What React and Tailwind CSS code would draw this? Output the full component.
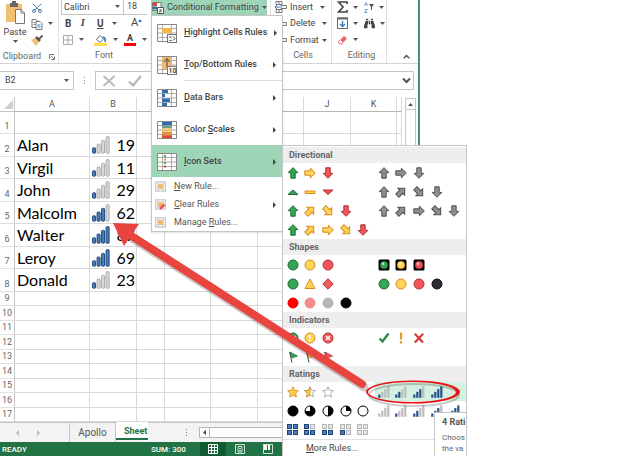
import { LuScissors } from "react-icons/lu";
import { FaBinoculars } from "react-icons/fa";

const COLUMNS = [
    { label: "A", width: "w-[75px]" },
    { label: "B", width: "w-[47px]" },
    { label: "", width: "w-[28px]" },
    { label: "", width: "w-[46px]" },
    { label: "", width: "w-[47px]" },
    { label: "", width: "w-[46px]" },
    { label: "J", width: "w-[47px]" },
    { label: "K", width: "w-[46px]" },
    { label: "", width: "w-auto" },
];

const PEOPLE = [
    { name: "Alan", score: 19, level: 1 },
    { name: "Virgil", score: 11, level: 1 },
    { name: "John", score: 29, level: 1 },
    { name: "Malcolm", score: 62, level: 3 },
    { name: "Walter", score: 87, level: 4 },
    { name: "Leroy", score: 69, level: 4 },
    { name: "Donald", score: 23, level: 1 },
];

const TONES = {
    green: ["#35a556", "#1c6b33"],
    yellow: ["#ffd558", "#d88a1c"],
    red: ["#f0565a", "#b02f34"],
    gray: ["#8f8f8f", "#4f4f4f"],
    black: ["#2b2b33", "#101014"],
};

const Icon = ({ children }) => (
    <svg width="12" height="12" viewBox="0 0 12 12" aria-hidden="true">
        {children}
    </svg>
);

const Arrow = ({ tone, turn = 0 }) => (
    <Icon>
        <path
            d="M6 .7 L10.8 5.6 H8.2 V11.2 H3.8 V5.6 H1.2 Z"
            transform={`rotate(${turn} 6 6)`}
            fill={TONES[tone][0]}
            stroke={TONES[tone][1]}
        />
    </Icon>
);

const Dot = ({ tone, fill, mark }) => (
    <Icon>
        <circle cx="6" cy="6" r="5" fill={fill || TONES[tone][0]} stroke={fill || TONES[tone][1]} />
        {mark === "check" && <path d="M3.5 6 L5.4 8 L8.6 4" fill="none" stroke="#fff" strokeWidth="1.5" />}
        {mark === "bang" && <path d="M6 3 V6.8 M6 8 V9.3" stroke="#fff" strokeWidth="1.6" />}
        {mark === "cross" && <path d="M4 4 L8 8 M8 4 L4 8" stroke="#fff" strokeWidth="1.5" />}
    </Icon>
);

const Lamp = ({ tone }) => (
    <Icon>
        <rect x=".5" y=".5" width="11" height="11" rx="1.5" fill="#000" />
        <circle cx="6" cy="6" r="3.8" fill={TONES[tone][0]} stroke={TONES[tone][1]} strokeWidth=".6" />
        <circle cx="5" cy="4.8" r="1.2" fill="#fff" opacity=".7" />
    </Icon>
);

const Poly = ({ tone, d }) => (
    <Icon>
        <path d={d} fill={TONES[tone][0]} stroke={TONES[tone][1]} />
    </Icon>
);

const Flag = ({ tone }) => (
    <Icon>
        <path d="M3 1 L10.5 5 L5 7 Z" fill={TONES[tone][0]} stroke={TONES[tone][1]} strokeWidth=".7" />
        <path d="M2.6 1 L5 11.5" stroke="#444" />
    </Icon>
);

const Stroke = ({ d, color, width = 2 }) => (
    <Icon>
        <path d={d} fill="none" stroke={color} strokeWidth={width} />
    </Icon>
);

const STAR = "M6 .8 L7.6 4.3 L11.4 4.7 L8.6 7.3 L9.4 11 L6 9.1 L2.6 11 L3.4 7.3 L.6 4.7 L4.4 4.3 Z";
const HALF_STAR = "M6 .8 L6 9.1 L2.6 11 L3.4 7.3 L.6 4.7 L4.4 4.3 Z";

const Star = ({ level }) => (
    <Icon>
        <path d={STAR} fill={level === 2 ? "#ffcf4a" : "#fff"} stroke={level === 2 ? "#d88a1c" : "#9a9a9a"} strokeWidth=".8" />
        {level === 1 && <path d={HALF_STAR} fill="#ffcf4a" stroke="#d88a1c" strokeWidth=".8" />}
    </Icon>
);

const Pie = ({ d, full }) => (
    <Icon>
        <circle cx="6" cy="6" r="5" fill={full ? "#000" : "#fff"} stroke="#000" />
        {d && <path d={d} fill="#000" />}
    </Icon>
);

// Filled from the bottom left corner
const Boxes = ({ level }) => (
    <Icon>
        {[[0, 6], [6, 6], [0, 0], [6, 0]].map(([x, y], i) => (
            <g key={i}>
                <rect x={x} y={y} width="5" height="5" fill={i < level ? "#1f4478" : "#b4b4b4"} />
                <rect x={x + 1} y={y + 1} width="3" height="3" fill={i < level ? "#4f7db8" : "#e6e6e6"} />
            </g>
        ))}
    </Icon>
);

const Bars = ({ level }) => (
    <Icon>
        {[0, 1, 2, 3].map((i) => (
            <rect
                key={i}
                x={i * 3 + 0.2}
                y={8.5 - i * 2.7}
                width="2.2"
                height={3.3 + i * 2.7}
                fill={i < level ? "#27548f" : "#bdbdbd"}
            />
        ))}
    </Icon>
);

const CellBars = ({ level }) => (
    <svg width="18" height="18" viewBox="0 0 18 18" aria-hidden="true">
        {[0, 1, 2, 3].map((i) => (
            <rect
                key={i}
                x={i * 4.5 + 0.6}
                y={11.8 - i * 3.7}
                width="3"
                height={5.4 + i * 3.7}
                rx=".8"
                fill={i < level ? "#4a80bb" : "#d9d9d9"}
                stroke={i < level ? "#1d4478" : "#a9a9a9"}
            />
        ))}
    </svg>
);

const ICON_GROUPS = [
    {
        title: "Directional",
        rows: [
            [
                [<Arrow tone="green" />, <Arrow tone="yellow" turn={90} />, <Arrow tone="red" turn={180} />],
                [<Arrow tone="gray" />, <Arrow tone="gray" turn={90} />, <Arrow tone="gray" turn={180} />],
            ],
            [
                [
                    <Poly tone="green" d="M1 8.5 L6 4 L11 8.5 Z" />,
                    <Poly tone="yellow" d="M1 5 H11 V7.5 H1 Z" />,
                    <Poly tone="red" d="M1 4 L6 8.5 L11 4 Z" />,
                ],
                [<Arrow tone="gray" />, <Arrow tone="gray" turn={45} />, <Arrow tone="gray" turn={135} />, <Arrow tone="gray" turn={180} />],
            ],
            [
                [<Arrow tone="green" />, <Arrow tone="yellow" turn={45} />, <Arrow tone="yellow" turn={135} />, <Arrow tone="red" turn={180} />],
                [
                    <Arrow tone="gray" />,
                    <Arrow tone="gray" turn={45} />,
                    <Arrow tone="gray" turn={90} />,
                    <Arrow tone="gray" turn={135} />,
                    <Arrow tone="gray" turn={180} />,
                ],
            ],
            [
                [
                    <Arrow tone="green" />,
                    <Arrow tone="yellow" turn={45} />,
                    <Arrow tone="yellow" turn={90} />,
                    <Arrow tone="yellow" turn={135} />,
                    <Arrow tone="red" turn={180} />,
                ],
            ],
        ],
    },
    {
        title: "Shapes",
        rows: [
            [
                [<Dot tone="green" />, <Dot tone="yellow" />, <Dot tone="red" />],
                [<Lamp tone="green" />, <Lamp tone="yellow" />, <Lamp tone="red" />],
            ],
            [
                [
                    <Dot tone="green" />,
                    <Poly tone="yellow" d="M6 1 L11 10.5 H1 Z" />,
                    <Poly tone="red" d="M6 .8 L11.2 6 L6 11.2 L.8 6 Z" />,
                ],
                [<Dot tone="green" />, <Dot tone="yellow" />, <Dot tone="red" />, <Dot tone="black" />],
            ],
            [[<Dot fill="#ff0000" />, <Dot fill="#f48a8a" />, <Dot fill="#b5b5b5" />, <Dot fill="#050505" />]],
        ],
    },
    {
        title: "Indicators",
        rows: [
            [
                [<Dot tone="green" mark="check" />, <Dot tone="yellow" mark="bang" />, <Dot tone="red" mark="cross" />],
                [
                    <Stroke color="#2c8a48" d="M1.5 6.5 L4.5 9.5 L10.5 1.5" width={2.4} />,
                    <Stroke color="#e39a2d" d="M6 .5 V7.5 M6 9 V11.5" width={2.2} />,
                    <Stroke color="#d8393c" d="M1.8 1.8 L10 10.5 M10.2 1.8 L1.8 10.5" width={2.2} />,
                ],
            ],
            [[<Flag tone="green" />, <Flag tone="yellow" />, <Flag tone="red" />]],
        ],
    },
    {
        title: "Ratings",
        rows: [
            [
                [<Star level={2} />, <Star level={1} />, <Star level={0} />],
                [<Bars level={1} />, <Bars level={2} />, <Bars level={3} />, <Bars level={4} />],
            ],
            [
                [
                    <Pie full />,
                    <Pie d="M6 6 V1 A5 5 0 1 1 1 6 Z" />,
                    <Pie d="M6 1 A5 5 0 0 1 6 11 Z" />,
                    <Pie d="M6 6 V1 A5 5 0 0 1 11 6 Z" />,
                    <Pie />,
                ],
                [<Bars level={0} />, <Bars level={1} />, <Bars level={2} />, <Bars level={3} />, <Bars level={4} />],
            ],
            [[<Boxes level={4} />, <Boxes level={3} />, <Boxes level={2} />, <Boxes level={1} />, <Boxes level={0} />]],
        ],
    },
];

const Caret = () => (
    <svg width="5" height="3" viewBox="0 0 5 3" className="shrink-0" aria-hidden="true">
        <path d="M0 0 H5 L2.5 3 Z" fill="#555" />
    </svg>
);

// Small spreadsheet thumbnail used by the menu entries
const Sheet = ({ size = 20, children }) => (
    <svg width={size} height={size} viewBox="0 0 20 20" className="shrink-0" aria-hidden="true">
        <path d="M.5 1.5 H19.5 V18.5 H.5 Z" fill="#fff" stroke="#888" />
        <path d="M1 5.5 H19 M1 10 H19 M1 14.5 H19 M5.5 2 V18 M14.5 2 V18" stroke="#aaa" />
        {children}
    </svg>
);

const HighlightIcon = () => (
    <Sheet>
        <rect x="5" y="5" width="10" height="5" fill="#f2b84b" />
        <rect x="10.5" y="11.5" width="9" height="8" fill="#fff" stroke="#777" />
        <path d="M12.5 13.5 L14.5 15 M12.5 17.5 H14.5 M16 13.5 L18 15.5 L16 17.5" fill="none" stroke="#444" />
    </Sheet>
);

const TopBottomIcon = () => (
    <Sheet>
        <rect x="5" y="2" width="10" height="12" fill="#efb674" />
        <path d="M10 12 V4 M7 7 L10 3.5 L13 7" fill="none" stroke="#444" />
        <rect x="10.5" y="11.5" width="9" height="8" fill="#fff" stroke="#777" />
        <text x="11.5" y="18.3" fontSize="7" fontFamily="Roboto, sans-serif" fill="#333">10</text>
    </Sheet>
);

const DataBarsIcon = () => (
    <Sheet>
        <rect x="5" y="2" width="6" height="3" fill="#2f6eab" />
        <rect x="5" y="6" width="3" height="3" fill="#2f6eab" />
        <rect x="5" y="10.5" width="8" height="3.5" fill="#2f6eab" />
        <rect x="5" y="15" width="5" height="3" fill="#2f6eab" />
    </Sheet>
);

const ColorScalesIcon = () => (
    <Sheet>
        <rect x="5" y="2" width="10" height="3" fill="#2f6eab" />
        <rect x="5" y="5.3" width="10" height="3" fill="#6f9e86" />
        <rect x="5" y="8.6" width="10" height="3" fill="#f0c36a" />
        <rect x="5" y="11.9" width="10" height="3" fill="#e8903a" />
        <rect x="5" y="15.2" width="10" height="3" fill="#d64b3a" />
    </Sheet>
);

const IconSetsIcon = () => (
    <Sheet>
        <rect x="7" y="3" width="2" height="2" fill="#4f9e6b" />
        <rect x="7" y="6.5" width="2" height="2" fill="#e8903a" />
        <rect x="7" y="10" width="2" height="2" fill="#4f9e6b" />
        <rect x="7" y="13.5" width="2" height="2" fill="#d64b3a" />
    </Sheet>
);

const RuleIcon = ({ erase }) => (
    <Sheet size={11}>
        <rect x="6" y="6" width="8" height="8" fill="#f4b860" />
        {erase && <path d="M9 18 L17 10" stroke="#e8545a" strokeWidth="5" />}
    </Sheet>
);

const MenuText = ({ hot, before = "", after }) => (
    <span className="flex-1 whitespace-pre text-left">
        {before}
        <u>{hot}</u>
        {after}
    </span>
);

const MenuArrow = () => (
    <svg width="3" height="6" viewBox="0 0 3 6" className="shrink-0" aria-hidden="true">
        <path d="M0 0 L3 3 L0 6 Z" fill="#444" />
    </svg>
);

const bigItem = "flex h-8 w-full items-center gap-[7px] pl-[5px] pr-[6px] pt-px text-[9px] font-medium text-[#444]";
const smallItem = "flex h-[18px] w-full items-center gap-2 pl-[3px] pr-[6px] pt-px text-[9px] text-[#555]";

const IconSetGallery = () => (
    <div className="absolute left-full top-0 z-10 w-[185px] overflow-hidden border border-b-0 border-[#c6c6c6] bg-white pt-px">
        {ICON_GROUPS.map((group) => (
            <section key={group.title}>
                <h2 className="h-4 bg-[#eeeeee] pl-[6px] text-[9px] font-bold leading-4 text-[#666]">{group.title}</h2>
                {group.rows.map((sets, r) => (
                    <div key={r} className="flex h-[19px] pl-px">
                        {sets.map((icons, s) => {
                            const active = group.title === "Ratings" && r === 0 && s === 1;
                            return (
                                <button
                                    key={s}
                                    type="button"
                                    aria-label={`${group.title}, ${icons.length} icons`}
                                    className={`grid w-[91px] grid-cols-5 items-center justify-items-center pr-[3px] ${active ? "bg-[#d3f0e0]" : ""}`}
                                >
                                    {icons.map((icon, i) => (
                                        <span key={i}>{icon}</span>
                                    ))}
                                </button>
                            );
                        })}
                    </div>
                ))}
            </section>
        ))}
        <button type="button" className="block h-[17px] w-full border-t border-[#e1e1e1] pl-[23px] text-left text-[9px] leading-4 text-[#444]">
            <u>M</u>ore Rules...
        </button>

        {/* Tooltip of the hovered set */}
        <div role="tooltip" className="absolute bottom-0 right-0 h-11 w-8 whitespace-nowrap border border-r-0 border-b-0 border-[#c6c6c6] bg-white pl-[7px] pt-1 text-[9px] leading-[11px] text-[#666]">
            <p className="mb-1 font-bold text-[#555]">4 Rati</p>
            <p className="text-[8px]">Choos</p>
            <p className="text-[8px]">the va</p>
        </div>
    </div>
);

const FormattingMenu = () => (
    <div className="absolute left-0 top-full z-10 w-[132px] border border-[#c6c6c6] bg-white shadow-sm">
        <button type="button" className={bigItem}>
            <HighlightIcon />
            <MenuText hot="H" after="ighlight Cells Rules" />
            <MenuArrow />
        </button>
        <button type="button" className={bigItem}>
            <TopBottomIcon />
            <MenuText hot="T" after="op/Bottom Rules" />
            <MenuArrow />
        </button>
        <hr className="ml-8 border-[#dcdcdc]" />
        <button type="button" className={bigItem}>
            <DataBarsIcon />
            <MenuText hot="D" after="ata Bars" />
            <MenuArrow />
        </button>
        <button type="button" className={bigItem}>
            <ColorScalesIcon />
            <MenuText before="Color " hot="S" after="cales" />
            <MenuArrow />
        </button>
        <div className="relative">
            <button type="button" aria-expanded="true" className={`${bigItem} bg-[#9fd5b7]`}>
                <IconSetsIcon />
                <MenuText hot="I" after="con Sets" />
                <MenuArrow />
            </button>
            <IconSetGallery />
        </div>
        <button type="button" className={smallItem}>
            <RuleIcon />
            <MenuText hot="N" after="ew Rule..." />
        </button>
        <button type="button" className={smallItem}>
            <RuleIcon erase />
            <MenuText hot="C" after="lear Rules" />
            <MenuArrow />
        </button>
        <button type="button" className={smallItem}>
            <RuleIcon />
            <MenuText before="Manage " hot="R" after="ules..." />
        </button>
    </div>
);

const GroupLabel = ({ children }) => (
    <div className="flex h-[15px] items-center justify-center pt-px text-[9px] text-[#666]">{children}</div>
);

const CellsIcon = ({ accent }) => (
    <svg width="12" height="12" viewBox="0 0 12 12" aria-hidden="true">
        <path d="M1 .5 H7 V3.5 H1 Z M1 8.5 H7 V11.5 H1 Z M4 .5 V3.5 M4 8.5 V11.5 M6 4.5 H11.5 V7.5 H6 Z" fill="none" stroke="#777" />
        <path d="M0 6 H5 M2 4 L0 6 L2 8" fill="none" stroke={accent} />
    </svg>
);

const Ribbon = () => (
    <div className="flex h-16 border-b border-[#d4d4d4] text-[9px] text-[#444]">
        <div className="flex w-[59px] flex-col border-r border-[#e1e1e1]">
            <div className="flex h-[49px] gap-[5px] pl-1">
                <button type="button" className="flex w-[22px] flex-col items-center">
                    <svg width="22" height="24" viewBox="0 0 22 24" className="mt-px shrink-0" aria-hidden="true">
                        <path d="M2 3 H18 V21 H2 Z" fill="#efbf72" />
                        <path d="M6 2 H8 V0 H12 V2 H14 V6 H6 Z" fill="#666" />
                        <path d="M11.5 8.5 H17 L20.5 12 V22.5 H11.5 Z" fill="#fff" stroke="#777" />
                        <path d="M17 8.5 V12 H20.5" fill="none" stroke="#777" />
                    </svg>
                    <span className="leading-[14px]">Paste</span>
                    <span className="mt-px"><Caret /></span>
                </button>
                <div className="flex flex-col">
                    <button type="button" aria-label="Cut" className="flex h-[15px] items-center">
                        <LuScissors size={12} className="-rotate-90 text-[#4a7ba8]" />
                    </button>
                    <button type="button" aria-label="Copy" className="flex h-[17px] items-center gap-[5px]">
                        <svg width="12" height="12" viewBox="0 0 12 12" aria-hidden="true">
                            <path d="M1 1.5 H5 L7 3.5 V9.5 H1 Z" fill="#fff" stroke="#777" />
                            <path d="M5 3.5 H9 L11 5.5 V11.5 H5 Z" fill="#fff" stroke="#777" />
                            <path d="M2.5 4.5 H4 M2.5 6.5 H4 M6.5 7 H9.5 M6.5 9 H9.5" stroke="#2f7cc0" />
                        </svg>
                        <Caret />
                    </button>
                    <button type="button" aria-label="Format painter" className="flex h-[17px] items-center">
                        <svg width="12" height="11" viewBox="0 0 12 11" aria-hidden="true">
                            <path d="M0 5 L4 3 L8 7 L5 11 Z" fill="#efbf72" />
                            <path d="M5 2 L9 6" stroke="#555" strokeWidth="2.5" />
                            <path d="M8 4 L11.5 .5" stroke="#555" strokeWidth="1.8" />
                        </svg>
                    </button>
                </div>
            </div>
            <GroupLabel>
                <span>Clipboard</span>
                <svg width="6" height="6" viewBox="0 0 6 6" className="ml-2" aria-hidden="true">
                    <path d="M.5 5 V.5 H5 M2 2 L5 5 M5.5 2.5 V5.5 H2.5" fill="none" stroke="#777" />
                </svg>
            </GroupLabel>
        </div>

        <div className="flex w-[92px] flex-col pl-[2px] pr-1">
            <div className="flex h-[15px]">
                <div className="relative flex w-[63px] border border-t-0 border-[#c6c6c6]">
                    <select aria-label="Font" className="w-full appearance-none pl-[2px] leading-[12px]">
                        <option>Calibri</option>
                    </select>
                    <span className="pointer-events-none absolute right-[3px] top-[5px]"><Caret /></span>
                </div>
                <input aria-label="Font size" defaultValue="18" className="w-[23px] border-b border-[#c6c6c6] pl-[3px]" />
            </div>
            <div className="flex h-[17px] items-center pl-1 text-[10px]">
                <button type="button" className="w-4 text-left font-bold">B</button>
                <button type="button" className="w-4 text-left font-serif italic font-bold">I</button>
                <button type="button" className="w-[15px] text-left font-bold underline">U</button>
                <Caret />
                <button type="button" aria-label="Grow font" className="ml-[14px] flex text-[11px]">
                    A
                    <svg width="4" height="3" viewBox="0 0 4 3" className="mt-1" aria-hidden="true">
                        <path d="M0 3 L2 0 L4 3 Z" fill="#2f7cc0" />
                    </svg>
                </button>
            </div>
            <div className="flex h-[17px] items-center gap-[6px] pl-[2px]">
                <svg width="10" height="10" viewBox="0 0 10 10" className="shrink-0" aria-hidden="true">
                    <path d="M.5 .5 H9.5 V9.5 H.5 Z M5 0 V10 M0 5 H10" fill="none" stroke="#aaa" />
                </svg>
                <Caret />
                <svg width="13" height="12" viewBox="0 0 13 12" className="ml-1 shrink-0" aria-hidden="true">
                    <path d="M2.5 5.5 L6 1.5 L9.5 5 L6 8.5 Z" fill="#fff" stroke="#666" />
                    <path d="M9 3 Q12 4 11 8" fill="none" stroke="#2f7cc0" strokeWidth="1.6" />
                    <rect y="9" width="13" height="3" fill="#ffdc50" />
                </svg>
                <Caret />
                <button type="button" aria-label="Font color" className="h-3 w-3 shrink-0 border-b-[3px] border-[#ff0000] text-[9px] font-bold leading-[9px]">A</button>
                <Caret />
            </div>
            <GroupLabel>Font</GroupLabel>
        </div>

        <div className="w-[120px] border-r border-[#e1e1e1]">
            <div className="relative">
                <button type="button" aria-expanded="true" className="flex h-[15px] w-[116px] items-center gap-[3px] whitespace-nowrap bg-[#9fd5b7] pl-px">
                    <svg width="12" height="12" viewBox="0 0 12 12" className="shrink-0" aria-hidden="true">
                        <path d="M.5 .5 H9 V8.5 H.5 Z" fill="#fff" stroke="#777" />
                        <rect x="1" y="1" width="4" height="3" fill="#e0413c" />
                        <rect x="1" y="4.5" width="4" height="3" fill="#2f6eab" />
                        <path d="M5.5 5.5 H11.5 V11.5 H5.5 Z" fill="#fff" stroke="#555" />
                        <path d="M7 8 H10 M7 9.6 H10 M9.4 7 L7.6 10.6" stroke="#555" strokeWidth=".7" />
                    </svg>
                    Conditional Formatting
                    <Caret />
                </button>
                <FormattingMenu />
            </div>
        </div>

        <div className="flex w-[61px] flex-col border-r border-[#e1e1e1] pl-1">
            <button type="button" className="flex h-[15px] items-center gap-[3px]">
                <CellsIcon accent="#2f7cc0" />
                Insert
                <span className="ml-1"><Caret /></span>
            </button>
            <button type="button" className="flex h-[17px] items-center gap-[3px] pt-px">
                <CellsIcon accent="#e0413c" />
                Delete
                <span className="ml-1"><Caret /></span>
            </button>
            <button type="button" className="flex h-[17px] items-center gap-[3px] pt-px">
                <CellsIcon accent="#2f7cc0" />
                Format
                <Caret />
            </button>
            <GroupLabel>Cells</GroupLabel>
        </div>

        <div className="flex w-[55px] flex-col border-r border-[#e1e1e1] pl-[5px]">
            <div className="flex h-[15px] items-center gap-[5px]">
                <svg width="11" height="12" viewBox="0 0 11 12" aria-hidden="true">
                    <path d="M10 3 V1 H1.5 L6 6 L1.5 11 H10 V9" fill="none" stroke="#444" strokeWidth="1.7" />
                </svg>
                <Caret />
                <span className="ml-px flex flex-col text-[6px] leading-[7px] text-[#2f7cc0]">
                    <span>A</span>
                    <span>Z</span>
                </span>
                <svg width="5" height="6" viewBox="0 0 5 6" className="-ml-1" aria-hidden="true">
                    <path d="M0 0 H5 L3 3 V6 H2 V3 Z" fill="#555" />
                </svg>
                <Caret />
            </div>
            <div className="flex h-[17px] items-center gap-[5px]">
                <svg width="11" height="12" viewBox="0 0 11 12" aria-hidden="true">
                    <path d="M.5 1 H10.5 V11.5 H.5 Z" fill="#fff" stroke="#666" />
                    <path d="M0 1.5 H11" stroke="#666" strokeWidth="2" />
                    <path d="M5.5 4 V9.5 M3 7 L5.5 9.5 L8 7" fill="none" stroke="#2f7cc0" strokeWidth="1.4" />
                </svg>
                <Caret />
                <FaBinoculars size={11} className="ml-px text-[#444]" />
                <Caret />
            </div>
            <div className="flex h-[17px] items-center gap-[5px]">
                <svg width="11" height="10" viewBox="0 0 11 10" aria-hidden="true">
                    <path d="M3 5 L7 .8 L10 3.6 L6 8 Z" fill="#ef6a6e" />
                    <path d="M3 5 L1 7 L3 9 H5 L6 8" fill="#fff" stroke="#ef6a6e" />
                </svg>
                <Caret />
            </div>
            <GroupLabel>Editing</GroupLabel>
        </div>

        <div className="flex flex-1 items-end justify-end pb-1 pr-[8px]">
            <button type="button" aria-label="Collapse the ribbon">
                <svg width="7" height="5" viewBox="0 0 7 5" aria-hidden="true">
                    <path d="M.7 4.3 L3.5 1.5 L6.3 4.3" fill="none" stroke="#555" strokeWidth="1.5" />
                </svg>
            </button>
        </div>
    </div>
);

const FormulaBar = () => (
    <div className="flex h-[33px] items-stretch py-[7px] pr-1">
        <div className="flex w-[74px] items-center border border-l-0 border-[#c6c6c6] pr-1">
            <input aria-label="Name box" defaultValue="B2" className="w-full min-w-0 pl-[5px] text-[9px] text-[#444]" />
            <Caret />
        </div>
        <div className="flex w-[21px] flex-col items-center justify-center gap-[2px]">
            <i className="h-px w-px bg-[#888]" />
            <i className="h-px w-px bg-[#888]" />
            <i className="h-px w-px bg-[#888]" />
        </div>
        <div className="flex flex-1 items-center border border-[#c6c6c6] pl-[6px] pr-[2px]">
            <svg width="14" height="12" viewBox="0 0 14 12" aria-hidden="true">
                <path d="M1.5 1 L12.5 11 M12.5 1 L1.5 11" stroke="#b9b9b9" strokeWidth="2" />
            </svg>
            <svg width="14" height="12" viewBox="0 0 14 12" className="ml-3" aria-hidden="true">
                <path d="M1 6.5 L5 10.5 L13 1" fill="none" stroke="#b9b9b9" strokeWidth="2.4" />
            </svg>
            <input aria-label="Formula" className="min-w-0 flex-1" />
            <svg width="9" height="7" viewBox="0 0 9 7" aria-hidden="true">
                <path d="M1 1.5 L4.5 5 L8 1.5" fill="none" stroke="#555" strokeWidth="2" />
            </svg>
        </div>
    </div>
);

const Grid = () => (
    <table className="flex-1 table-fixed border-separate border-spacing-0">
        <thead>
            <tr className="h-[15px]">
                <th className="w-[15px] border-b border-r border-[#c6c6c6] p-0 pl-1">
                    <svg width="9" height="9" viewBox="0 0 9 9" aria-hidden="true">
                        <path d="M9 0 V9 H0 Z" fill="#d0d0d0" />
                    </svg>
                </th>
                {COLUMNS.map((col, i) => (
                    <th key={i} scope="col" className={`${col.width} border-b border-r border-b-[#b5b5b5] border-r-[#d9d9d9] p-0 text-[9px] font-normal leading-3 text-[#555]`}>
                        {col.label}
                    </th>
                ))}
            </tr>
        </thead>
        <tbody>
            {Array.from({ length: 17 }, (_, r) => {
                const person = PEOPLE[r - 1];
                const height = r < 8 ? (r % 2 ? "h-[23px]" : "h-[22px]") : r % 2 ? "h-[15px]" : "h-[14px]";
                return (
                    <tr key={r} className={height}>
                        <th scope="row" className="border-b border-r border-b-[#e1e1e1] border-r-[#c6c6c6] p-0 align-bottom text-[9px] font-normal leading-[13px] text-[#666]">
                            {r + 1}
                        </th>
                        {COLUMNS.map((col, c) => (
                            <td key={c} className="border-b border-r border-[#d9d9d9] p-0 font-[Lato,sans-serif] text-[16px] leading-5 text-black">
                                {person && c === 0 && <span className="block pl-[2px]">{person.name}</span>}
                                {person && c === 1 && (
                                    <span className="flex items-center justify-between pl-[2px] pr-px">
                                        <CellBars level={person.level} />
                                        {person.score}
                                    </span>
                                )}
                            </td>
                        ))}
                    </tr>
                );
            })}
        </tbody>
    </table>
);

const SheetTabs = () => (
    <div className="flex h-5 items-stretch border-t border-[#c6c6c6] bg-[#f3f3f3] text-[9px] text-[#555]">
        <div className="flex w-[70px] items-center border-r border-[#c6c6c6] pl-4">
            <svg width="24" height="6" viewBox="0 0 24 6" aria-hidden="true">
                <path d="M3 0 V6 L0 3 Z M21 0 V6 L24 3 Z" fill="#b5b5b5" />
            </svg>
        </div>
        <button type="button" className="w-[46px] border-r border-[#c6c6c6] text-[10px]">Apollo</button>
        <button type="button" className="-mt-px mb-[2px] flex w-8 items-center border-b-2 border-[#217346] bg-white pl-2 pt-[3px] font-bold text-[#217346]">
            Sheet
        </button>
        <div className="flex flex-1 items-center pl-[38px]">
            <span className="flex flex-col gap-[2px]">
                <i className="h-px w-px bg-[#777]" />
                <i className="h-px w-px bg-[#777]" />
                <i className="h-px w-px bg-[#777]" />
            </span>
            <span className="ml-3 flex h-[11px] w-[11px] items-center justify-center border border-[#b5b5b5] bg-white">
                <svg width="3" height="5" viewBox="0 0 3 5" aria-hidden="true">
                    <path d="M3 0 V5 L0 2.5 Z" fill="#444" />
                </svg>
            </span>
            <span className="h-[11px] flex-1 border border-l-0 border-[#b5b5b5] bg-white" />
        </div>
    </div>
);

const StatusBar = () => (
    <div className="flex h-3.5 items-center bg-[#217346] text-[8px] font-medium text-white">
        <span className="w-[151px] pl-[2px] pt-px">READY</span>
        <span className="w-[49px] pt-px">SUM: 300</span>
        <button type="button" aria-label="Normal view" className="flex h-full w-[26px] items-center justify-center bg-[#0f5a30]">
            <svg width="10" height="10" viewBox="0 0 10 10" aria-hidden="true">
                <path d="M.5 .5 H9.5 V9.5 H.5 Z M3.5 0 V10 M6.5 0 V10 M0 3.5 H10 M0 6.5 H10" fill="none" stroke="#fff" />
            </svg>
        </button>
        <button type="button" aria-label="Page layout" className="flex w-[28px] items-center justify-center">
            <svg width="10" height="10" viewBox="0 0 10 10" aria-hidden="true">
                <path d="M.5 .5 H9.5 V9.5 H.5 Z M3 2.5 H7 V8 H3 Z M4 4.5 H6 M4 6.5 H6" fill="none" stroke="#cfe3d7" />
            </svg>
        </button>
        <button type="button" aria-label="Page break preview" className="flex w-[28px] items-center justify-center">
            <svg width="10" height="10" viewBox="0 0 10 10" aria-hidden="true">
                <path d="M0 0 H4 V6 H0 Z M5 0 H7 V6 H5 Z" fill="#fff" />
                <path d="M.5 .5 H9.5 V9.5 H.5 Z" fill="none" stroke="#cfe3d7" />
            </svg>
        </button>
    </div>
);

// Red callout drawn over the window: ellipse round the rating set, arrow to the cell
const Callout = () => (
    <svg width="470" height="410" viewBox="0 0 470 410" className="pointer-events-none absolute left-0 top-0 z-20" aria-hidden="true">
        <path d="M132 238 L364 387" stroke="#000" strokeOpacity=".2" strokeWidth="9" strokeLinecap="round" />
        <path d="M130 235 L362 384" stroke="#e8453f" strokeWidth="8" strokeLinecap="round" />
        <path d="M113 223 L139 224 L124 246 Z" fill="#e8453f" />
        <ellipse cx="414" cy="395" rx="45" ry="11" fill="none" stroke="#000" strokeOpacity=".2" strokeWidth="2" />
        <path
            fillRule="evenodd"
            d="M366 392 a47 11.5 0 1 0 94 0 a47 11.5 0 1 0 -94 0 Z M368 392 a44 10 0 1 1 88 0 a44 10 0 1 1 -88 0 Z"
            fill="#e81414"
        />
    </svg>
);

export default function App() {
    return (
        <div className="relative flex min-h-screen overflow-hidden bg-white font-[Roboto,sans-serif]">
            <main className="flex flex-1 flex-col border-r-2 border-[#4d8f6b]">
                <Ribbon />
                <FormulaBar />
                <div className="flex flex-1">
                    <Grid />
                    <div className="ml-[3px] mr-[2px] mt-px w-[11px] border border-[#c6c6c6]">
                        <button type="button" aria-label="Scroll up" className="flex h-[11px] w-full items-center justify-center border-b border-[#c6c6c6]">
                            <svg width="5" height="3" viewBox="0 0 5 3" aria-hidden="true">
                                <path d="M0 3 H5 L2.5 0 Z" fill="#555" />
                            </svg>
                        </button>
                    </div>
                </div>
                <SheetTabs />
                <StatusBar />
            </main>
            <aside className="w-[204px]" />
            <Callout />
        </div>
    );
}
